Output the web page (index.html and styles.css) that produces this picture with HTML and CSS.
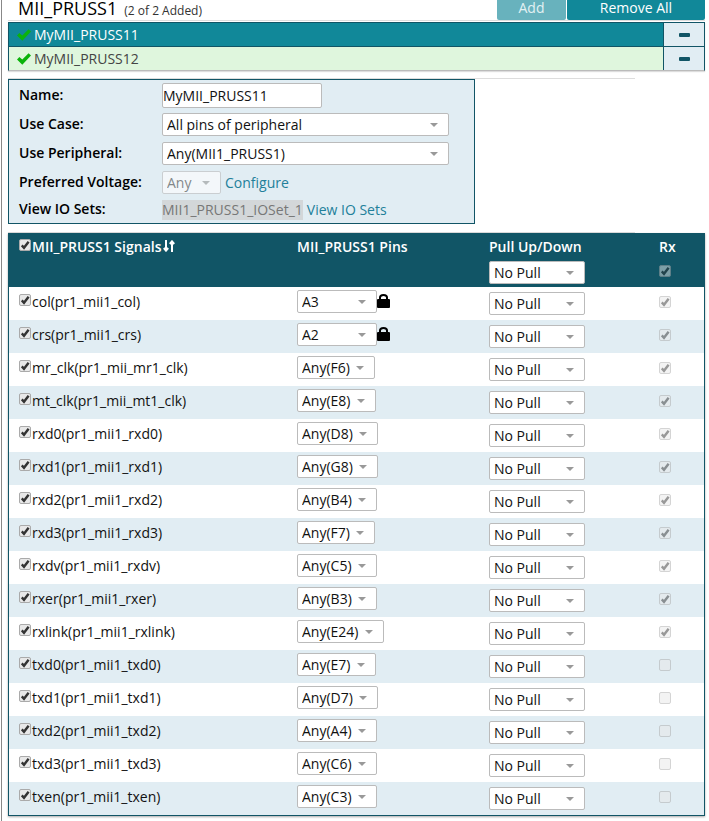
FILE: index.html
```html
<!DOCTYPE html>
<html lang="en">
<head>
<meta charset="utf-8">
<title>MII_PRUSS1</title>
<link rel="stylesheet" href="styles.css">
</head>
<body>
<main class="pane">
  <header class="head">
    <h1 class="title">MII_PRUSS1 <small class="count">(2 of 2 Added)</small></h1>
    <div class="actions">
      <button class="btn" type="button" disabled>Add</button>
      <button class="btn btn-wide" type="button">Remove All</button>
    </div>
  </header>

  <ul class="instances">
    <li class="instance selected">
      <span class="instance-name"><svg class="tick" viewBox="0 0 14 12" aria-hidden="true"><path d="M0 6.6 2.4 4 5.3 6.4 11.6 0.2 14 2.6 5.3 11.8Z"/></svg>MyMII_PRUSS11</span>
      <button class="remove" type="button" aria-label="Remove MyMII_PRUSS11"><svg viewBox="0 0 11 4" aria-hidden="true"><rect width="11" height="4" rx="1"/></svg></button>
    </li>
    <li class="instance">
      <span class="instance-name"><svg class="tick" viewBox="0 0 14 12" aria-hidden="true"><path d="M0 6.6 2.4 4 5.3 6.4 11.6 0.2 14 2.6 5.3 11.8Z"/></svg>MyMII_PRUSS12</span>
      <button class="remove" type="button" aria-label="Remove MyMII_PRUSS12"><svg viewBox="0 0 11 4" aria-hidden="true"><rect width="11" height="4" rx="1"/></svg></button>
    </li>
  </ul>

  <hr class="rule">
  <form class="settings">
    <label for="name">Name:</label>
    <div class="field"><input class="text" id="name" type="text" value="MyMII_PRUSS11"></div>
    <label for="usecase">Use Case:</label>
    <div class="field"><select class="select wide" id="usecase"><option>All pins of peripheral</option></select></div>
    <label for="peripheral">Use Peripheral:</label>
    <div class="field"><select class="select wide" id="peripheral"><option>Any(MII1_PRUSS1)</option></select></div>
    <label for="voltage">Preferred Voltage:</label>
    <div class="field"><select class="select voltage" id="voltage" disabled><option>Any</option></select><a href="#configure">Configure</a></div>
    <span class="label">View IO Sets:</span>
    <div class="field"><span class="ioset">MII1_PRUSS1_IOSet_1</span><a href="#iosets">View IO Sets</a></div>
  </form>

  <hr class="rule">
  <table class="signals">
    <colgroup><col><col class="col-pins"><col class="col-pull"><col class="col-rx"></colgroup>
    <thead>
      <tr>
        <th scope="col"><span class="signal"><input class="check" type="checkbox" id="all" checked><label for="all">MII_PRUSS1 Signals</label><svg class="sort" viewBox="0 0 12 12" aria-hidden="true"><path d="M3 0V10M0.8 8 3 10.6 5.2 8M9 12V2M6.8 4 9 1.4 11.2 4"/></svg></span></th>
        <th scope="col">MII_PRUSS1 Pins</th>
        <th scope="col"><label for="pull-all">Pull Up/Down</label><select class="select pull" id="pull-all"><option>No Pull</option></select></th>
        <th scope="col"><label for="rx-all">Rx</label><input class="check" type="checkbox" id="rx-all" checked disabled></th>
      </tr>
    </thead>
    <tbody id="rows"></tbody>
  </table>
</main>
<script src="signals.js"></script>
</body>
</html>
```
FILE: styles.css
```css
:root {
  --teal: #118899;
  --dark: #115566;
  --pale: #e1edf3;
  --line: #bbbbbb;
}

* {
  box-sizing: border-box;
}

body {
  margin: 0 0 0 1px;
  border-left: 1px solid #888888;
  background: #ffffff;
  color: #111111;
  font: 14px/20px "Open Sans", "Noto Sans", sans-serif;
}

button,
input,
select {
  font: inherit;
  color: inherit;
  margin: 0;
}

a {
  color: #22809a;
  text-decoration: none;
}

.pane {
  padding: 0 4px 5px 6px;
}

.head {
  display: flex;
  justify-content: space-between;
  height: 21px;
  border-bottom: 1px solid #dddddd;
}

.title {
  display: flex;
  align-items: baseline;
  gap: 7px;
  margin: 0;
  padding-left: 10px;
  color: #000000;
  font-size: 18px;
  font-weight: 400;
  line-height: 16px;
}

.count {
  color: #333333;
  font-size: 12px;
}

.actions {
  display: flex;
  gap: 1px;
}

.btn {
  width: 69px;
  height: 20px;
  padding: 0 0 4px;
  border: 0;
  border-radius: 0 0 2px 2px;
  background: var(--teal);
  color: #ffffff;
  line-height: 16px;
}

.btn:disabled {
  background: #68b2bd;
  color: #e3f1f3;
}

.btn-wide {
  width: 138px;
}

.instances {
  margin: 1px 0 7px;
  padding: 0;
  list-style: none;
  border: 1px solid var(--dark);
  border-bottom-color: var(--line);
  box-shadow: 0 1px 1px #dddddd;
}

.instance {
  display: flex;
  height: 23px;
  background: #dff6dd;
  color: #444444;
}

.instance + .instance {
  height: 24px;
  border-top: 1px solid var(--dark);
}

.selected {
  background: var(--teal);
  color: #ffffff;
}

.instance-name {
  display: flex;
  flex: 1;
  align-items: center;
  gap: 3px;
  padding-left: 8px;
}

.tick {
  width: 14px;
  height: 12px;
  fill: #0bb30b;
}

.remove {
  display: flex;
  align-items: center;
  justify-content: center;
  width: 41px;
  padding: 0;
  border: 0;
  border-left: 1px solid var(--dark);
  background: var(--pale);
}

.remove svg {
  width: 11px;
  height: 4px;
  fill: var(--dark);
}

.rule {
  width: 90%;
  height: 1px;
  margin: 0;
  border: 0;
  background: #dddddd;
}

.settings {
  display: grid;
  grid-template-columns: 143px 1fr;
  grid-template-rows: repeat(4, 29px) 25px;
  align-items: center;
  width: 67%;
  margin-bottom: 8px;
  padding: 1px 25px 1px 10px;
  border: 1px solid var(--dark);
  background: var(--pale);
}

.settings > label,
.label {
  padding-bottom: 2px;
  color: #000000;
  font-weight: 600;
}

.field {
  display: flex;
  align-items: center;
  gap: 4px;
}

.text {
  width: 160px;
  height: 25px;
  padding: 0 0 1px;
  border: 1px solid var(--line);
  border-radius: 2px;
  background: #ffffff;
}

.select {
  appearance: none;
  height: 23px;
  padding: 0 24px 0 4px;
  border: 1px solid var(--line);
  border-radius: 2px;
  background: #ffffff url("data:image/svg+xml,%3Csvg xmlns='http://www.w3.org/2000/svg' width='8' height='4'%3E%3Cpath d='M0 0H8L4 4Z' fill='%23999999'/%3E%3C/svg%3E") no-repeat right 10px center;
  line-height: 20px;
}

.select:disabled {
  opacity: 0.6;
  color: #444444;
}

.wide {
  width: 100%;
}

.voltage {
  width: 59px;
}

.pull {
  width: 96px;
}

.locked {
  width: 80px;
}

.ioset {
  background: #d3d7d9;
  color: #777777;
}

.signals {
  width: 100%;
  border: 1px solid var(--dark);
  border-spacing: 0;
  table-layout: fixed;
  box-shadow: 0 1px 2px #aaaaaa;
}

.col-pins {
  width: 192px;
}

.col-pull {
  width: 170px;
}

.col-rx {
  width: 55px;
}

.signals th {
  height: 53px;
  padding: 3px 0 0 10px;
  background: var(--dark);
  color: #ffffff;
  font-weight: 600;
  text-align: left;
  vertical-align: top;
}

.signals th > label {
  display: block;
}

.signals th .select {
  display: block;
  margin-top: 4px;
  color: #111111;
  font-weight: 400;
}

.signals th > .check {
  margin-top: 8px;
}

.signals td {
  height: 33px;
  padding: 3px 0 0 10px;
  vertical-align: top;
}

.signals tbody tr:nth-child(even) {
  background: var(--pale);
}

.signals .pull-cell {
  padding-top: 5px;
}

.signals .rx-cell {
  padding-top: 9px;
}

.signal {
  display: flex;
  gap: 1px;
}

td .signal {
  padding-top: 2px;
}

.signal .check {
  margin-top: 2px;
}

.pin {
  display: flex;
}

.check {
  appearance: none;
  display: block;
  flex: none;
  width: 12px;
  height: 12px;
  border: 1px solid #aaaaaa;
  border-radius: 2px;
  background: #e8e8e8;
}

.check:checked {
  background: #e8e8e8 url("data:image/svg+xml,%3Csvg xmlns='http://www.w3.org/2000/svg' width='10' height='10'%3E%3Cpath d='M1.8 5.4 4 7.8 8.6 1.8' fill='none' stroke='%23333333' stroke-width='2.4'/%3E%3C/svg%3E") no-repeat center;
}

.check:disabled {
  opacity: 0.5;
}

.sort {
  width: 12px;
  height: 12px;
  margin-top: 3px;
  margin-left: 1px;
  fill: none;
  stroke: #ffffff;
  stroke-width: 2;
}

.lock {
  width: 13px;
  height: 15px;
  margin-top: 3px;
}
```
FILE: signals.js
```js
// [signal, peripheral pin, assigned pin, receiver enabled]
const signals = [
  ["col", "pr1_mii1_col", "A3", true],
  ["crs", "pr1_mii1_crs", "A2", true],
  ["mr_clk", "pr1_mii_mr1_clk", "Any(F6)", true],
  ["mt_clk", "pr1_mii_mt1_clk", "Any(E8)", true],
  ["rxd0", "pr1_mii1_rxd0", "Any(D8)", true],
  ["rxd1", "pr1_mii1_rxd1", "Any(G8)", true],
  ["rxd2", "pr1_mii1_rxd2", "Any(B4)", true],
  ["rxd3", "pr1_mii1_rxd3", "Any(F7)", true],
  ["rxdv", "pr1_mii1_rxdv", "Any(C5)", true],
  ["rxer", "pr1_mii1_rxer", "Any(B3)", true],
  ["rxlink", "pr1_mii1_rxlink", "Any(E24)", true],
  ["txd0", "pr1_mii1_txd0", "Any(E7)", false],
  ["txd1", "pr1_mii1_txd1", "Any(D7)", false],
  ["txd2", "pr1_mii1_txd2", "Any(A4)", false],
  ["txd3", "pr1_mii1_txd3", "Any(C6)", false],
  ["txen", "pr1_mii1_txen", "Any(C3)", false],
];

const lock = `<svg class="lock" viewBox="0 0 13 15" aria-hidden="true"><rect y="6" width="13" height="9" rx="1"/><path d="M3 7V4.5Q3 2 6.5 2T10 4.5V7" fill="none" stroke="#000" stroke-width="2"/></svg>`;

document.getElementById("rows").innerHTML = signals.map(([name, pad, pin, rx]) => {
  const locked = !pin.startsWith("Any");
  return `<tr>
    <td><span class="signal"><input class="check" type="checkbox" id="use-${name}" checked><label for="use-${name}">${name}(${pad})</label></span></td>
    <td><span class="pin"><select class="select${locked ? " locked" : ""}" aria-label="${name} pin"><option>${pin}</option></select>${locked ? lock : ""}</span></td>
    <td class="pull-cell"><select class="select pull" aria-label="${name} pull"><option>No Pull</option></select></td>
    <td class="rx-cell"><input class="check" type="checkbox" aria-label="${name} receive" disabled${rx ? " checked" : ""}></td>
  </tr>`;
}).join("");
```
